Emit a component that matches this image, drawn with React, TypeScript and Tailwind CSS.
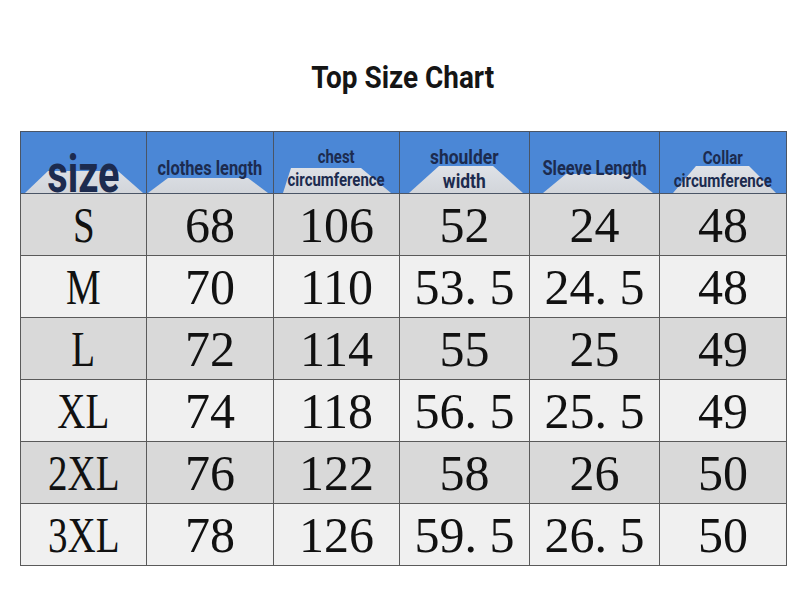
import React from 'react';

const headers = [
  { lines: ['size'], clip: '[clip-path:polygon(4px_100%,27px_39px,97px_39px,122px_100%)]', text: 'text-[51px] leading-[34px] scale-x-[0.78] self-start mt-[26px]' },
  { lines: ['clothes length'], clip: '[clip-path:polygon(1px_100%,21px_46px,101px_46px,121px_100%)]', text: 'text-[20px] leading-[22px] scale-x-[0.82] translate-y-[5px]' },
  { lines: ['chest', 'circumference'], clip: '[clip-path:polygon(9px_100%,17px_36px,87px_36px,117px_100%)]', text: 'text-[17.6px] leading-[23px] scale-x-[0.85] translate-y-[6px]' },
  { lines: ['shoulder', 'width'], clip: '[clip-path:polygon(9px_100%,39px_34px,93px_34px,123px_100%)]', text: 'text-[20.5px] leading-[24px] scale-x-[0.85] translate-y-[6px]' },
  { lines: ['Sleeve Length'], clip: '[clip-path:polygon(13px_100%,36px_42px,99px_42px,123px_100%)]', text: 'text-[20px] leading-[22px] scale-x-[0.82] translate-y-[5px]' },
  { lines: ['Collar', 'circumference'], clip: '[clip-path:polygon(13px_100%,36px_34px,89px_34px,116px_100%)]', text: 'text-[17.8px] leading-[23px] scale-x-[0.85] translate-y-[6px]' },
];

const widths = ['w-[126px]', 'w-[127px]', 'w-[126px]', 'w-[130px]', 'w-[130px]', 'w-[127px]'];

const rows = [
  ['S', '68', '106', '52', '24', '48'],
  ['M', '70', '110', '53. 5', '24. 5', '48'],
  ['L', '72', '114', '55', '25', '49'],
  ['XL', '74', '118', '56. 5', '25. 5', '49'],
  ['2XL', '76', '122', '58', '26', '50'],
  ['3XL', '78', '126', '59. 5', '26. 5', '50'],
];

export default function App() {
  return (
    <div className="w-[795px] h-[597px] bg-white flex flex-col">
      <div className="h-[131px] flex items-start justify-center pt-[58px] pl-[10px]">
        <h1 className="inline-block scale-x-[0.9] text-[31px] leading-[40px] font-bold text-[#151515] font-['Roboto',sans-serif]">
          Top Size Chart
        </h1>
      </div>

      <table className="ml-[20px] border-collapse table-fixed w-[767px] border border-[#5a5a5a]">
        <thead>
          <tr className="h-[62px]">
            {headers.map((h, i) => (
              <th key={i} className={`${widths[i]} p-0 border border-[#4a5566] bg-[#4b87d6] align-middle`}>
                <div className="relative h-[61px] flex items-center justify-center overflow-hidden">
                  <div className={`absolute inset-0 bg-gradient-to-b from-[#eef2f8] to-[#d2d5da] ${h.clip}`} />
                  <div className={`relative inline-block font-bold text-[#1c2b4f] font-['Roboto',sans-serif] ${h.text}`}>
                    {h.lines.map((l, j) => (
                      <div key={j} className="whitespace-nowrap">{l}</div>
                    ))}
                  </div>
                </div>
              </th>
            ))}
          </tr>
        </thead>
        <tbody>
          {rows.map((r, i) => (
            <tr key={i} className={`h-[62px] ${i % 2 === 0 ? 'bg-[#d9d9d9]' : 'bg-[#f0f0f0]'}`}>
              {r.map((v, j) => (
                <td key={j} className="p-0 border border-[#5a5a5a] text-center align-middle">
                  <span className={`inline-block text-[50px] leading-[50px] text-[#111] font-['Liberation_Serif',serif] ${j === 0 ? 'scale-x-[0.78]' : ''}`}>
                    {v}
                  </span>
                </td>
              ))}
            </tr>
          ))}
        </tbody>
      </table>
    </div>
  );
}
